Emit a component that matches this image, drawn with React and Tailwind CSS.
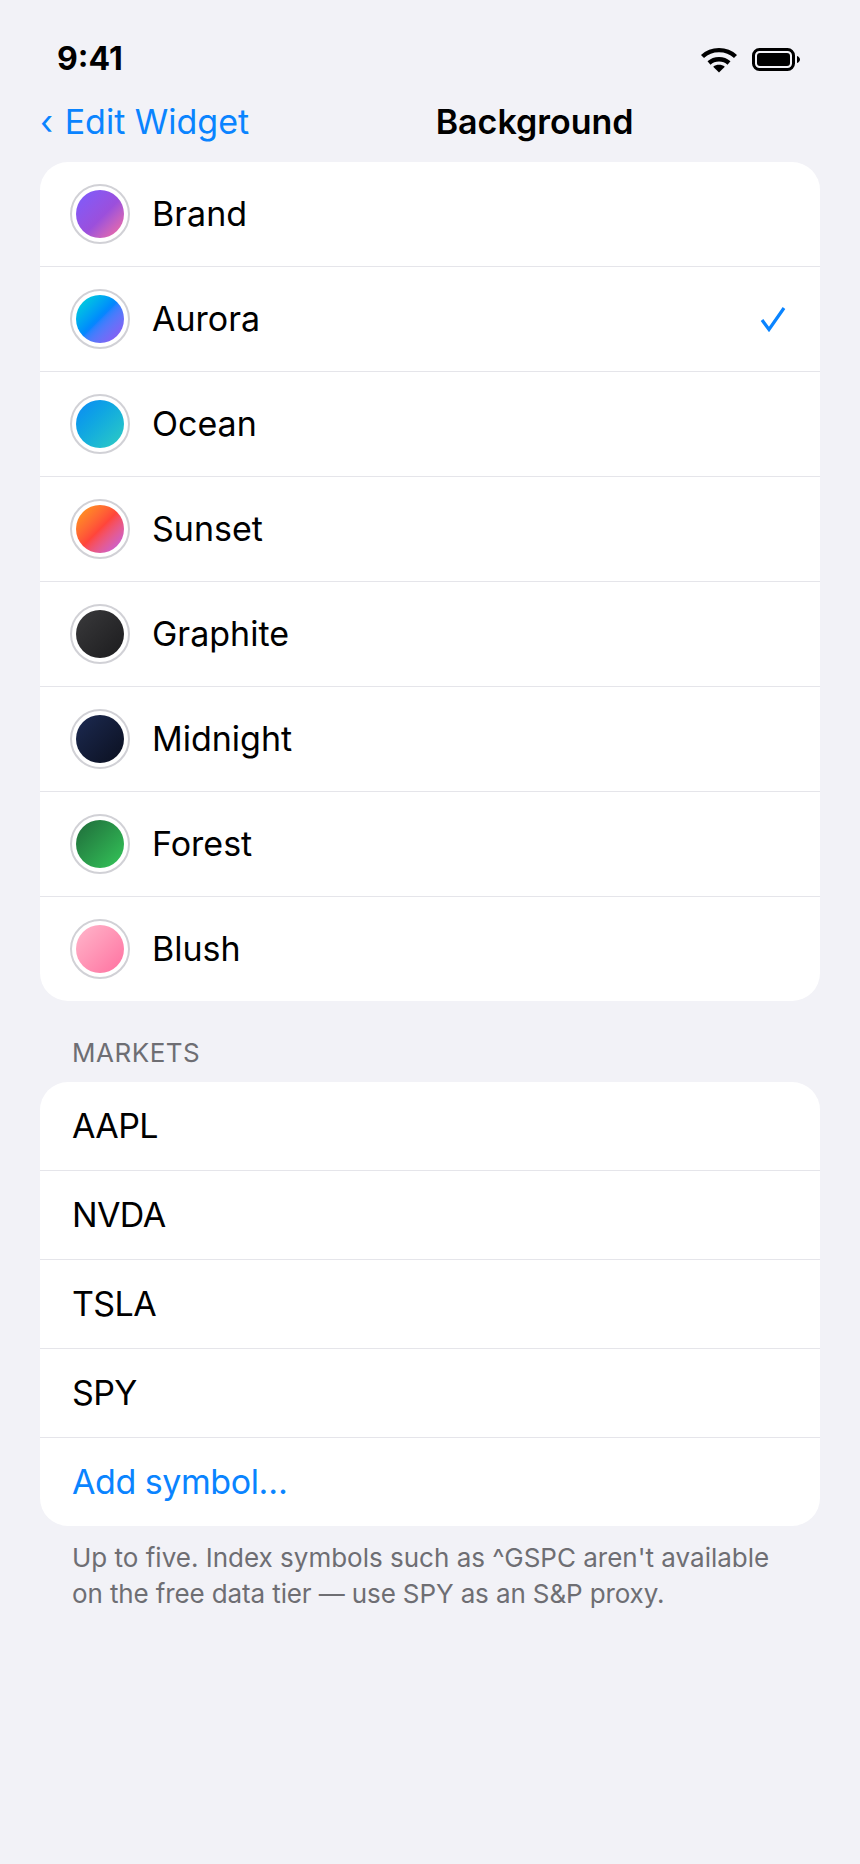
import React from 'react';

const backgrounds = [
    { name: 'Brand', swatch: 'bg-gradient-to-br from-[#7a5cff] via-[#9b4fdc] via-55% to-[#ff6a98]' },
    { name: 'Aurora', swatch: 'bg-gradient-to-br from-[#00dcd0] via-[#0a84ff] to-[#9550f0]', selected: true },
    { name: 'Ocean', swatch: 'bg-gradient-to-br from-[#1288f5] to-[#30cdc0]' },
    { name: 'Sunset', swatch: 'bg-gradient-to-br from-[#ff9f0a] via-[#ff453a] to-[#bf5af2]' },
    { name: 'Graphite', swatch: 'bg-gradient-to-br from-[#3a3a3c] to-[#1c1c1e]' },
    { name: 'Midnight', swatch: 'bg-gradient-to-br from-[#1c2a52] to-[#0b1020]' },
    { name: 'Forest', swatch: 'bg-gradient-to-br from-[#1f6b3a] to-[#34c759]' },
    { name: 'Blush', swatch: 'bg-gradient-to-br from-[#ffb6cb] to-[#ff6fa0]' },
];

const symbols = ['AAPL', 'NVDA', 'TSLA', 'SPY'];

const WifiIcon = () => (
    <svg width="38" height="27" viewBox="0 0 38 27" fill="none">
        <path d="M2.5 10.5C11.5 2 26.5 2 35.5 10.5" stroke="#000" strokeWidth="4.4" strokeLinecap="butt" />
        <path d="M9 17C14.5 12 23.5 12 29 17" stroke="#000" strokeWidth="4.4" strokeLinecap="butt" />
        <path d="M19 26.5L13.2 20.8C16.4 18.2 21.6 18.2 24.8 20.8Z" fill="#000" />
    </svg>
);

const BatteryIcon = () => (
    <svg width="48" height="23" viewBox="0 0 48 23" fill="none">
        <rect x="1.5" y="1.5" width="40" height="20" rx="6" stroke="#000" strokeWidth="3" />
        <rect x="5" y="5" width="33" height="13" rx="3" fill="#000" />
        <path d="M45 8C46.8 8.6 48 10 48 11.5C48 13 46.8 14.4 45 15Z" fill="#000" />
    </svg>
);

const App = () => {
    return (
        <div className="min-h-[1864px] bg-[#f2f2f7] font-['Inter',sans-serif] text-black">
            {/* status bar */}
            <div className="pt-[38px] pl-[57px] pr-[60px] h-[80px] flex justify-between">
                <span className="text-[32px] leading-[42px] font-bold">9:41</span>
                <div className="flex items-center gap-[14px] h-[42px]">
                    <WifiIcon />
                    <BatteryIcon />
                </div>
            </div>

            {/* nav bar */}
            <div className="h-[82px] px-[40px] flex items-center justify-between">
                <span className="text-[34px] text-[#0a84ff]"><span className="mr-[2px]">‹</span> Edit Widget</span>
                <span className="text-[34px] font-semibold">Background</span>
                <span></span>
            </div>

            <div className="px-[40px]">
                <div className="bg-white rounded-[28px] overflow-hidden">
                    {backgrounds.map((b) => (
                        <div key={b.name} className="box-content h-[104px] pl-[30px] pr-[34px] flex items-center border-b border-[#e5e5ea] last:border-b-0">
                            <div className="w-[60px] h-[60px] rounded-full border-2 border-[#d1d1d6] flex items-center justify-center">
                                <div className={`w-[48px] h-[48px] rounded-full ${b.swatch}`}></div>
                            </div>
                            <span className="ml-[22px] mb-[2px] text-[34px] flex-1">{b.name}</span>
                            {b.selected && (
                                <svg width="26" height="26" viewBox="0 0 26 26" fill="none">
                                    <path d="M2 14L9 23.5L24 2" stroke="#0a84ff" strokeWidth="3.2" />
                                </svg>
                            )}
                        </div>
                    ))}
                </div>

                <div className="pt-[34px] mb-[11px] px-[32px] text-[26px] leading-[36px] tracking-[0.5px] text-[#6e6e73]">MARKETS</div>

                <div className="bg-white rounded-[28px] overflow-hidden">
                    {symbols.map((s) => (
                        <div key={s} className="box-content h-[88px] px-[32px] flex items-center border-b border-[#e5e5ea] text-[34px] tracking-[-0.6px]">
                            <span className="mb-[2px]">{s}</span>
                        </div>
                    ))}
                    <div className="h-[88px] px-[32px] flex items-center text-[34px] tracking-[-0.45px] text-[#0a84ff]">
                        <span className="mb-[2px]">Add symbol…</span>
                    </div>
                </div>

                <p className="mt-[14px] px-[32px] text-[26px] leading-[36px] text-[#6e6e73]">
                    Up to five. Index symbols such as ^GSPC aren't available<br />
                    <span className="tracking-[-0.12px]">on the free data tier — use SPY as an S&amp;P proxy.</span>
                </p>
            </div>
        </div>
    );
};

export default App;
